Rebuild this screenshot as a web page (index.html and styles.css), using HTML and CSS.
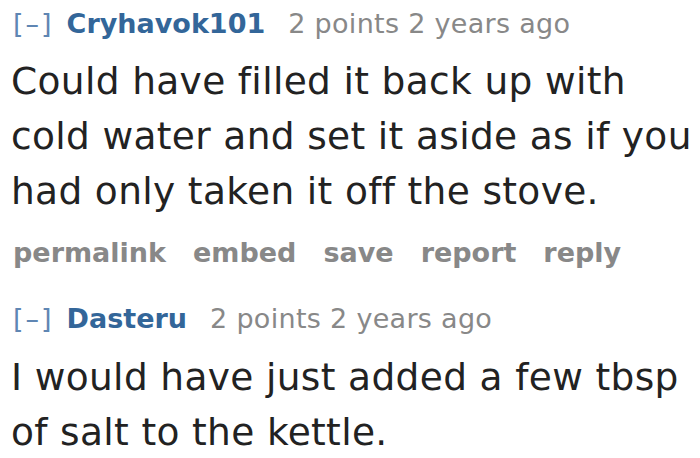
FILE: index.html
```html
<!DOCTYPE html>
<html>
<head>
<meta charset="utf-8">
<link rel="stylesheet" href="styles.css">
</head>
<body>
<div class="thread">
  <div class="comment">
    <div class="tagline">
      <span class="toggle">[–]</span>
      <span class="author">Cryhavok101</span>
      <span class="meta">2 points 2 years ago</span>
    </div>
    <div class="body">Could have filled it back up with cold water and set it aside as if you had only taken it off the stove.</div>
    <ul class="buttons">
      <li>permalink</li>
      <li>embed</li>
      <li>save</li>
      <li>report</li>
      <li>reply</li>
    </ul>
  </div>
  <div class="comment">
    <div class="tagline">
      <span class="toggle">[–]</span>
      <span class="author">Dasteru</span>
      <span class="meta">2 points 2 years ago</span>
    </div>
    <div class="body">I would have just added a few tbsp of salt to the kettle.</div>
  </div>
</div>
</body>
</html>
```
FILE: styles.css
```css
html, body {
  margin: 0;
  padding: 0;
  background: #ffffff;
}
body {
  font-family: "DejaVu Sans", Verdana, sans-serif;
  width: 700px;
  height: 458px;
  overflow: hidden;
}
.thread {
  padding: 7px 0 0 11px;
}
.tagline {
  display: flex;
  align-items: baseline;
  font-size: 27px;
  line-height: 34px;
  padding-left: 2px;
}
.toggle {
  color: #5f86b3;
  margin-right: 13px;
  letter-spacing: 2px;
}
.author {
  color: #336699;
  font-weight: bold;
  margin-right: 23px;
}
.meta {
  color: #888888;
  letter-spacing: 0.3px;
}
.body {
  color: #222222;
  font-size: 37.5px;
  line-height: 55px;
  letter-spacing: 0.35px;
  margin-top: 13px;
  width: 689px;
}
.buttons {
  list-style: none;
  margin: 17px 0 0 0;
  padding: 0 0 0 2px;
  display: flex;
  gap: 27px;
  font-size: 27px;
  line-height: 34px;
  font-weight: bold;
  color: #888888;
}
.comment + .comment {
  margin-top: 32px;
}
.comment + .comment .body {
  margin-top: 14px;
}
```
